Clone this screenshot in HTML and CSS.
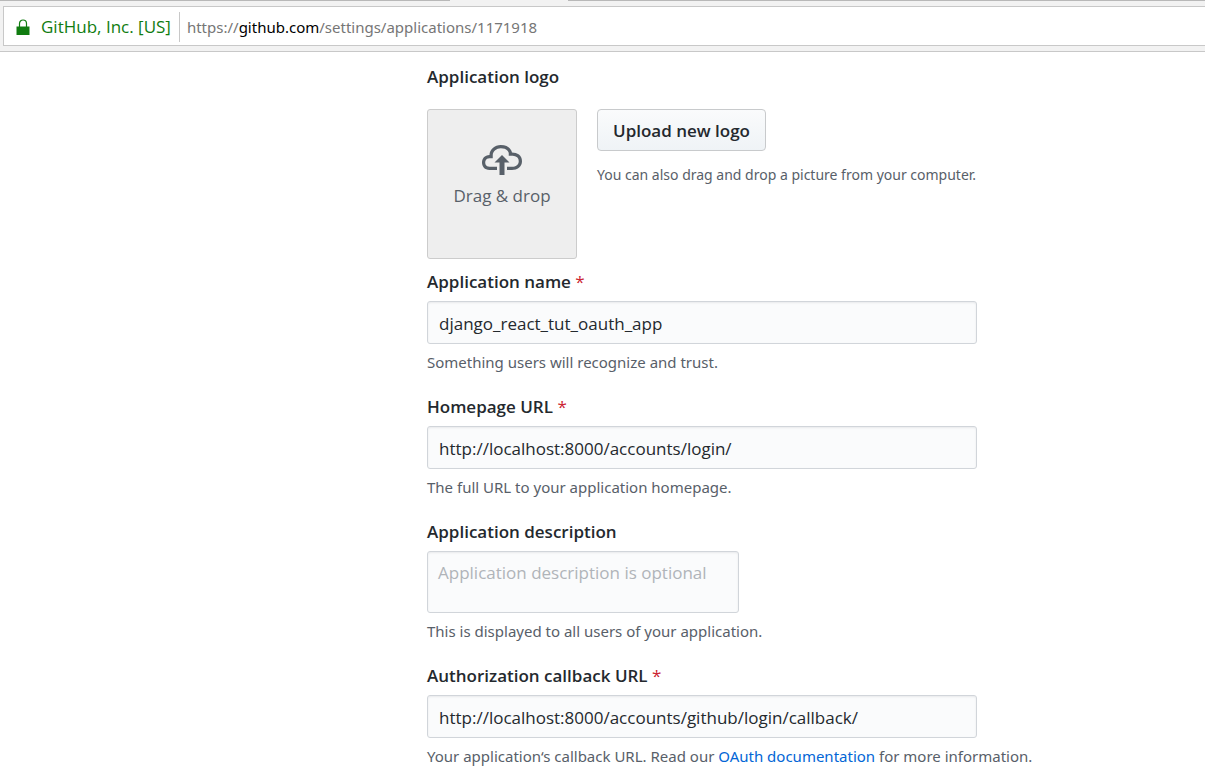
FILE: index.html
```html
<!DOCTYPE html>
<html lang="en">
<head>
<meta charset="utf-8">
<title>Application settings</title>
<link rel="stylesheet" href="styles.css">
</head>
<body>
<header class="browser">
  <div class="tabs"><span class="tab-active"></span></div>
  <div class="address">
    <svg class="lock" viewBox="0 0 14 17" aria-hidden="true"><path d="M3.5 8V4.5a3.5 3.5 0 0 1 7 0V8" fill="none" stroke="currentColor" stroke-width="1.2"/><path d="M.5 7.5h13V16H.5z" fill="currentColor"/></svg>
    <span class="owner">GitHub, Inc. [US]</span>
    <span class="url">https://<span class="domain">github.com</span>/settings/applications/1171918</span>
  </div>
</header>
<main class="page">
  <form class="form">
    <h2 class="label">Application logo</h2>
    <div class="logo-row">
      <div class="drop">
        <svg class="cloud" viewBox="0 0 16 16" aria-hidden="true"><path fill="currentColor" d="M7 9H5l3-3 3 3H9v5H7V9zm5-4c0-.44-.91-3-4.5-3C5.08 2 3 3.92 3 6 1.02 6 0 7.52 0 9c0 1.53 1 3 3 3h3v-1.3H3c-1.62 0-1.7-1.42-1.7-1.7 0-.17.05-1.7 1.7-1.7h1.3V6c0-1.39 1.56-2.7 3.2-2.7 2.55 0 3.13 1.55 3.2 1.8v1.2H12c.81 0 2.7.22 2.7 2.2 0 2.09-2.25 2.2-2.7 2.2h-2V12h2c2.08 0 4-1.16 4-3.5C16 6.06 14.08 5 12 5z"/></svg>
        <span>Drag &amp; drop</span>
      </div>
      <div class="upload">
        <button class="button" type="button">Upload new logo</button>
        <p class="note hint">You can also drag and drop a picture from your computer.</p>
      </div>
    </div>
    <div class="group">
      <label class="label" for="name">Application name <span class="required">*</span></label>
      <input class="field" id="name" type="text" value="django_react_tut_oauth_app">
      <p class="note">Something users will recognize and trust.</p>
    </div>
    <div class="group">
      <label class="label" for="home">Homepage URL <span class="required">*</span></label>
      <input class="field" id="home" type="text" value="http://localhost:8000/accounts/login/">
      <p class="note">The full URL to your application homepage.</p>
    </div>
    <div class="group">
      <label class="label" for="desc">Application description</label>
      <textarea class="field area" id="desc" placeholder="Application description is optional"></textarea>
      <p class="note">This is displayed to all users of your application.</p>
    </div>
    <div class="group">
      <label class="label" for="callback">Authorization callback URL <span class="required">*</span></label>
      <input class="field" id="callback" type="text" value="http://localhost:8000/accounts/github/login/callback/">
      <p class="note">Your application‘s callback URL. Read our <a class="link" href="#">OAuth documentation</a> for more information.</p>
    </div>
  </form>
</main>
</body>
</html>
```
FILE: styles.css
```css
* { box-sizing: border-box; }
body {
  margin: 0;
  background: #fff;
  color: #24292e;
  font-family: "Open Sans", "Noto Sans", sans-serif;
  font-size: 17px;
}
.browser {
  background: #f2f2f2;
  border-bottom: 1px solid #c8c8c8;
  padding-bottom: 5px;
}
.tabs {
  height: 1px;
  background: #b8b8b8;
  padding-left: 450px;
}
.tab-active {
  display: block;
  width: 118px;
  height: 1px;
  background: #f2f2f2;
}
.address {
  display: flex;
  align-items: center;
  height: 40px;
  margin: 5px 0 0 3px;
  padding: 2px 0 0 12px;
  background: #fff;
  border: 1px solid #c8c8c8;
  border-right: 0;
}
.lock { width: 14px; height: 17px; color: #107c10; }
.owner {
  margin-left: 11px;
  padding-right: 8px;
  border-right: 1px solid #c8c8c8;
  color: #107c10;
  line-height: 30px;
  white-space: nowrap;
}
.url { padding-left: 7px; font-family: "Noto Sans", sans-serif; font-size: 15px; color: #767676; white-space: nowrap; }
.domain { color: #000; }
.page { padding: 12px 0 8px 427px; }
.form { display: flex; flex-direction: column; gap: 20px; }
.label { display: block; margin: 0; font-size: 17px; font-weight: 600; line-height: 26px; }
.required { color: #cb2431; font-weight: 400; }
.logo-row { display: flex; gap: 20px; margin: -1px 0 -10px; }
.drop {
  display: flex;
  flex-direction: column;
  align-items: center;
  width: 150px;
  height: 150px;
  padding-top: 30px;
  background: #eee;
  border: 1px solid #ccc;
  border-radius: 3px;
  color: #586069;
  line-height: 32px;
}
.cloud { width: 40px; height: 40px; }
.button {
  height: 42px;
  padding: 0 15px;
  border: 1px solid #c8cacc;
  border-radius: 4px;
  background: linear-gradient(#fafbfc, #eff3f6);
  color: #24292e;
  font: inherit;
  font-weight: 600;
}
.note { margin: 6px 0 0; color: #586069; font-family: "Noto Sans", sans-serif; font-size: 15px; line-height: 24px; }
.hint { margin-top: 12px; font-size: 14px; }
.field {
  display: block;
  width: 550px;
  max-width: 100%;
  height: 43px;
  margin: 6px 0 0;
  padding: 2px 11px 0;
  border: 1px solid #d1d5da;
  border-radius: 3px;
  outline: 0;
  background: #fafbfc;
  box-shadow: inset 0 1px 2px rgba(27, 31, 35, 0.08);
  color: #24292e;
  font: inherit;
}
.area { width: 312px; height: 62px; padding: 8px 10px; line-height: 26px; resize: none; }
.area::placeholder { color: #b0b4b9; opacity: 1; }
.link { color: #0366d6; text-decoration: none; }
```
